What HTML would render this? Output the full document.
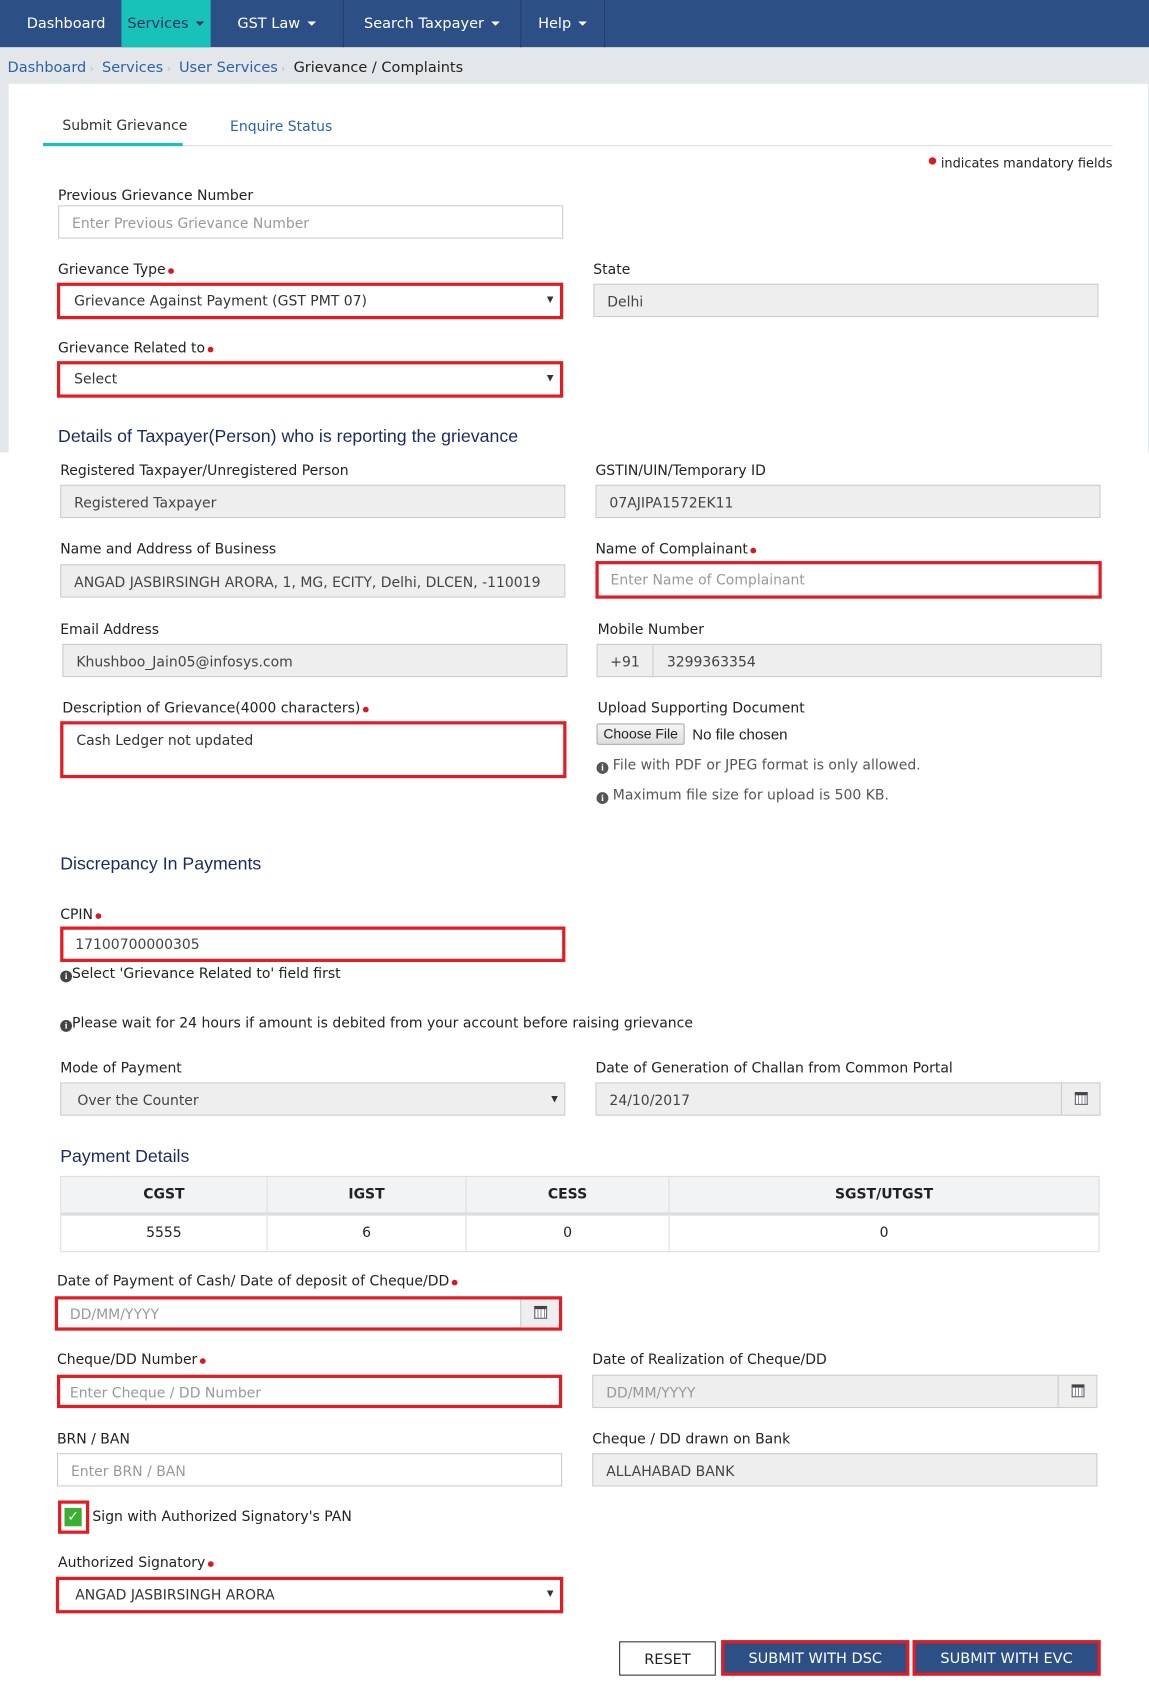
<!DOCTYPE html>
<html><head><meta charset="utf-8">
<style>
*{box-sizing:border-box;margin:0;padding:0}
html,body{width:1149px;height:1686px;overflow:hidden;background:#fff}
#w{position:absolute;left:0;top:0;width:1069px;height:1569px;transform:scale(1.07484);transform-origin:0 0;font-family:"DejaVu Sans","Liberation Sans",sans-serif;font-size:13px;color:#222}
.a{position:absolute}
.l{position:absolute;line-height:16px;white-space:nowrap;font-size:13px;color:#222;margin-top:2px}
.s{color:#e0161f;font-size:7px;vertical-align:top;position:relative;top:0px;margin-left:2px}
.in{position:absolute;height:31px;border:1px solid #ccc;background:#fff;line-height:29px;padding-left:12px;padding-top:2px;font-size:13px;color:#999;white-space:nowrap;overflow:hidden}
.g{background:#eee;color:#444}
.r{border:3px solid #e31b23;line-height:25px;padding-left:13px;color:#333}
.h{position:absolute;font-family:"Liberation Sans",Arial,sans-serif;font-size:16.5px;color:#1b2a5c;white-space:nowrap;margin-top:1px}
.nav{position:absolute;top:0;height:44px;line-height:44px;color:#fff;font-size:13.5px;text-align:center}
.car{display:inline-block;width:0;height:0;border-left:4px solid transparent;border-right:4px solid transparent;border-top:4px solid #fff;vertical-align:middle;margin-left:7px}
.arr{position:absolute;right:6px;top:0;font-size:8px;color:#333}
.cal{position:absolute;top:0;right:0;width:36px;height:100%;border-left:1px solid #ccc;background:#eee}
.cal i{position:absolute;left:12px;top:8px;width:12px;height:12px;border:1px solid #666;border-top:3px solid #444;background:repeating-linear-gradient(90deg,#fff 0 2px,#88a 2px 3px)}
.info{display:inline-block;width:11px;height:11px;border-radius:50%;background:#444;color:#fff;font-size:9px;line-height:11px;text-align:center;font-weight:bold;font-family:"Liberation Serif",serif;vertical-align:-1px}
td,th{border:1px solid #ddd;text-align:center;font-size:13px}
th{background:#f2f3f5;height:35px;font-weight:bold;border-bottom:3px solid #ddd}
td{height:35px}
</style></head><body><div id="w">
<div class="a" style="left:0;top:0;width:1069px;height:44px;background:#2c4f86"></div>
<div class="a" style="left:0;top:44px;width:1069px;height:377px;background:#e3e7ea"></div>
<div class="a" style="left:8px;top:78px;width:1060px;height:343px;background:#fff"></div>
<div class="nav" style="left:5px;width:113px">Dashboard</div>
<div class="nav" style="left:113px;width:83px;background:#18c2b9;color:#1d3355">Services<span class="car" style="border-top-color:#1d3355"></span></div>
<div class="nav" style="left:196px;width:124px;border-right:1px solid #22406f">GST Law<span class="car"></span></div>
<div class="nav" style="left:320px;width:165px;border-right:1px solid #22406f">Search Taxpayer<span class="car"></span></div>
<div class="nav" style="left:485px;width:78px;border-right:1px solid #22406f">Help<span class="car"></span></div>
<div class="l" style="left:7px;top:53px;color:#2c63a8;font-size:13.5px">Dashboard<span style="color:#bbb;font-size:10px"> › </span>&nbsp;Services<span style="color:#bbb;font-size:10px"> › </span>&nbsp;User Services<span style="color:#bbb;font-size:10px"> › </span>&nbsp;<span style="color:#222">Grievance / Complaints</span></div>
<div class="l" style="left:58px;top:108px;color:#333">Submit Grievance</div>
<div class="l" style="left:214px;top:109px;color:#2c63a8">Enquire Status</div>
<div class="a" style="left:40px;top:135px;width:995px;height:1px;background:#ddd"></div>
<div class="a" style="left:40px;top:133px;width:130px;height:3px;background:#18c2b9"></div>
<div class="l" style="right:34px;top:142px;font-size:12px"><span class="s" style="font-size:9px;top:-2px">●</span> indicates mandatory fields</div>

<div class="l" style="left:54px;top:173px">Previous Grievance Number</div>
<div class="in" style="left:54px;top:191px;width:470px">Enter Previous Grievance Number</div>

<div class="l" style="left:54px;top:242px">Grievance Type<span class="s">●</span></div>
<div class="in r" style="left:53px;top:263px;width:471px;height:34px">Grievance Against Payment (GST PMT 07)<span class="arr">▼</span></div>
<div class="l" style="left:552px;top:242px">State</div>
<div class="in g" style="left:552px;top:264px;width:470px">Delhi</div>

<div class="l" style="left:54px;top:315px">Grievance Related to<span class="s">●</span></div>
<div class="in r" style="left:53px;top:336px;width:471px;height:34px">Select<span class="arr">▼</span></div>

<div class="h" style="left:54px;top:396px">Details of Taxpayer(Person) who is reporting the grievance</div>

<div class="l" style="left:56px;top:429px">Registered Taxpayer/Unregistered Person</div>
<div class="in g" style="left:56px;top:451px;width:470px">Registered Taxpayer</div>
<div class="l" style="left:554px;top:429px">GSTIN/UIN/Temporary ID</div>
<div class="in g" style="left:554px;top:451px;width:470px">07AJIPA1572EK11</div>

<div class="l" style="left:56px;top:502px">Name and Address of Business</div>
<div class="in g" style="left:56px;top:525px;width:470px">ANGAD JASBIRSINGH ARORA, 1, MG, ECITY, Delhi, DLCEN, -110019</div>
<div class="l" style="left:554px;top:502px">Name of Complainant<span class="s">●</span></div>
<div class="in r" style="left:554px;top:522px;width:471px;height:35px;color:#999;line-height:28px;padding-left:11px">Enter Name of Complainant</div>

<div class="l" style="left:56px;top:577px">Email Address</div>
<div class="in g" style="left:58px;top:599px;width:470px">Khushboo_Jain05@infosys.com</div>
<div class="l" style="left:556px;top:577px">Mobile Number</div>
<div class="in g" style="left:555px;top:599px;width:470px;padding-left:0;padding-top:0"><span style="display:inline-block;width:52px;height:29px;padding-top:2px;text-align:center;border-right:1px solid #ccc">+91</span>&nbsp;&nbsp;&nbsp;3299363354</div>

<div class="l" style="left:58px;top:650px">Description of Grievance(4000 characters)<span class="s">●</span></div>
<div class="in r" style="left:56px;top:671px;width:471px;height:53px;line-height:28px;padding-left:12px">Cash Ledger not updated</div>
<div class="l" style="left:556px;top:650px">Upload Supporting Document</div>
<div class="a" style="left:555px;top:673px;width:82px;height:20px;border:1px solid #aaa;border-radius:2px;background:linear-gradient(#f5f5f5,#ddd);font-family:'Liberation Sans',sans-serif;font-size:13px;line-height:18px;text-align:center">Choose File</div>
<div class="l" style="left:644px;top:673px;font-family:'Liberation Sans',sans-serif;font-size:14px">No file chosen</div>
<div class="l" style="left:555px;top:703px;color:#555"><span class="info" style="background:#555">i</span> File with PDF or JPEG format is only allowed.</div>
<div class="l" style="left:555px;top:731px;color:#555"><span class="info" style="background:#555">i</span> Maximum file size for upload is 500 KB.</div>

<div class="h" style="left:56px;top:794px">Discrepancy In Payments</div>
<div class="l" style="left:56px;top:842px">CPIN<span class="s">●</span></div>
<div class="in r" style="left:56px;top:862px;width:470px;height:33px;color:#444;padding-left:11px">17100700000305</div>
<div class="l" style="left:56px;top:897px"><span class="info">i</span>Select 'Grievance Related to' field first</div>
<div class="l" style="left:56px;top:943px"><span class="info">i</span>Please wait for 24 hours if amount is debited from your account before raising grievance</div>

<div class="l" style="left:56px;top:985px">Mode of Payment</div>
<div class="in g" style="left:56px;top:1007px;width:470px;padding-left:15px">Over the Counter<span class="arr">▼</span></div>
<div class="l" style="left:554px;top:985px">Date of Generation of Challan from Common Portal</div>
<div class="in g" style="left:554px;top:1007px;width:470px">24/10/2017<span class="cal"><i></i></span></div>

<div class="h" style="left:56px;top:1066px">Payment Details</div>
<table class="a" style="left:56px;top:1094px;width:967px;border-collapse:collapse">
<tr><th style="width:192px">CGST</th><th style="width:185px">IGST</th><th style="width:189px">CESS</th><th>SGST/UTGST</th></tr>
<tr><td>5555</td><td>6</td><td>0</td><td>0</td></tr></table>

<div class="l" style="left:53px;top:1183px">Date of Payment of Cash/ Date of deposit of Cheque/DD<span class="s">●</span></div>
<div class="in r" style="left:51px;top:1206px;width:472px;height:32px;color:#999;padding-left:11px">DD/MM/YYYY<span class="cal"><i style="top:6px"></i></span></div>

<div class="l" style="left:53px;top:1256px">Cheque/DD Number<span class="s">●</span></div>
<div class="in r" style="left:53px;top:1279px;width:470px;height:31px;color:#999;line-height:25px;padding-left:9px">Enter Cheque / DD Number</div>
<div class="l" style="left:551px;top:1256px">Date of Realization of Cheque/DD</div>
<div class="in g" style="left:551px;top:1279px;width:470px;color:#999">DD/MM/YYYY<span class="cal"><i></i></span></div>

<div class="l" style="left:53px;top:1330px">BRN / BAN</div>
<div class="in" style="left:53px;top:1352px;width:470px">Enter BRN / BAN</div>
<div class="l" style="left:551px;top:1330px">Cheque / DD drawn on Bank</div>
<div class="in g" style="left:551px;top:1352px;width:470px">ALLAHABAD BANK</div>

<div class="a" style="left:54px;top:1396px;width:29px;height:31px;border:3px solid #e31b23"></div>
<div class="a" style="left:60px;top:1403px;width:16px;height:17px;background:#3bb030;color:#fff;font-size:13px;line-height:17px;text-align:center;font-weight:bold">✓</div>
<div class="l" style="left:86px;top:1402px">Sign with Authorized Signatory's PAN</div>

<div class="l" style="left:54px;top:1445px">Authorized Signatory<span class="s">●</span></div>
<div class="in r" style="left:52px;top:1467px;width:472px;height:34px;color:#333;padding-left:15px">ANGAD JASBIRSINGH ARORA<span class="arr">▼</span></div>

<div class="a" style="left:576px;top:1527px;width:90px;height:32px;border:1px solid #333;background:#fff;text-align:center;line-height:30px;font-size:13.5px;color:#222;padding-top:1px">RESET</div>
<div class="a" style="left:671px;top:1526px;width:175px;height:33px;border:3px solid #e31b23;background:#2c4f86;color:#fff;text-align:center;line-height:27px;font-size:13.5px;padding-top:1px">SUBMIT WITH DSC</div>
<div class="a" style="left:849px;top:1526px;width:175px;height:33px;border:3px solid #e31b23;background:#2c4f86;color:#fff;text-align:center;line-height:27px;font-size:13.5px;padding-top:1px">SUBMIT WITH EVC</div>
</div></body></html>
